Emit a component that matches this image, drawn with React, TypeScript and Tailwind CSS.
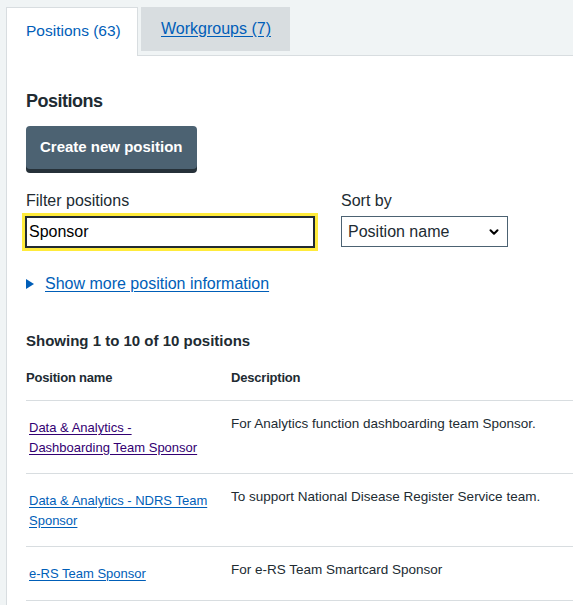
import { ChevronDown } from "lucide-react";

const rows = [
   {
      name: ["Data & Analytics -", "Dashboarding Team Sponsor"],
      description: "For Analytics function dashboarding team Sponsor.",
      visited: true,
   },
   {
      name: ["Data & Analytics - NDRS Team", "Sponsor"],
      description: "To support National Disease Register Service team.",
      visited: false,
   },
   {
      name: ["e-RS Team Sponsor"],
      description: "For e-RS Team Smartcard Sponsor",
      visited: false,
   },
];

export default function App() {
   return (
      <div
         className="min-h-screen overflow-hidden bg-[#f0f4f5] pt-[7px] pl-[6px] text-[#212b32]"
         style={{ fontFamily: '"Liberation Sans", Arial, sans-serif' }}
      >
         {/* Tabs */}
         <div className="flex items-start border-b border-[#d8dde0]">
            <div className="-mb-px h-[49px] w-[132px] border-x border-t border-[#d8dde0] bg-white pt-[11px] pl-[19px] text-[15.5px] leading-[24px] text-[#005eb8]">
               Positions (63)
            </div>
            <div className="ml-[3px] h-[44px] w-[149px] bg-[#d8dde0] pt-[10px] pl-[20px] text-[16px] leading-[24px]">
               <a href="#" className="text-[#005eb8] underline underline-offset-2">
                  Workgroups (7)
               </a>
            </div>
         </div>

         {/* Panel */}
         <div className="border-l border-[#d8dde0] bg-white pt-[31px] pb-[40px] pl-[19px]">
            <h2 className="text-[18px] leading-[28px] font-bold tracking-[-0.5px]">Positions</h2>

            <button className="mt-[11px] h-[43px] rounded-[4px] bg-[#4c6272] px-[14px] text-[15px] font-bold text-white shadow-[0_4px_0_#263139]">
               Create new position
            </button>

            <div className="mt-[20px] flex gap-[26px]">
               <div className="flex flex-col">
                  <label className="text-[16px] leading-[24px]">Filter positions</label>
                  <input
                     readOnly
                     value="Sponsor"
                     className="mt-[3px] -ml-[1px] h-[32px] w-[290px] border-2 border-[#212b32] px-[2px] text-[16px] text-black shadow-[0_0_0_3px_#ffeb3b] outline-none"
                  />
               </div>
               <div className="flex flex-col">
                  <label className="text-[16px] leading-[24px]">Sort by</label>
                  <div className="mt-[3px] flex h-[31px] w-[167px] items-center justify-between border border-[#4c6272] pr-[6px] pl-[6px] text-[16px]">
                     <span>Position name</span>
                     <ChevronDown size={14} strokeWidth={3.5} className="text-black" />
                  </div>
               </div>
            </div>

            <div className="mt-[24px] flex items-center text-[16px] leading-[24px]">
               <span className="mr-[11px] inline-block h-0 w-0 border-y-[5px] border-l-[8px] border-y-transparent border-l-[#005eb8]" />
               <a href="#" className="text-[#005eb8] underline underline-offset-2">
                  Show more position information
               </a>
            </div>

            <p className="mt-[33px] text-[15px] leading-[24px] font-bold">
               Showing 1 to 10 of 10 positions
            </p>

            <table className="mt-[15px] w-full border-collapse text-left">
               <thead>
                  <tr className="border-b border-[#d8dde0]">
                     <th className="w-[205px] pb-[12px] align-top text-[13px] leading-[20px] font-bold tracking-[-0.2px]">
                        Position name
                     </th>
                     <th className="pb-[12px] align-top text-[13px] leading-[20px] font-bold tracking-[-0.2px]">
                        Description
                     </th>
                  </tr>
               </thead>
               <tbody>
                  {rows.map((row) => (
                     <tr key={row.description} className="border-b border-[#d8dde0]">
                        <td className="pt-[17px] pb-[16px] pl-[3px] align-top text-[13px] leading-[19.5px]">
                           <a
                              href="#"
                              className={
                                 row.visited
                                    ? "text-[#330072] underline underline-offset-2"
                                    : "text-[#005eb8] underline underline-offset-2"
                              }
                           >
                              {row.name.map((line, i) => (
                                 <span key={i} className="block">
                                    {line}
                                 </span>
                              ))}
                           </a>
                        </td>
                        <td className="pt-[13px] align-top text-[13.5px] leading-[20px]">
                           {row.description}
                        </td>
                     </tr>
                  ))}
               </tbody>
            </table>
         </div>
      </div>
   );
}
